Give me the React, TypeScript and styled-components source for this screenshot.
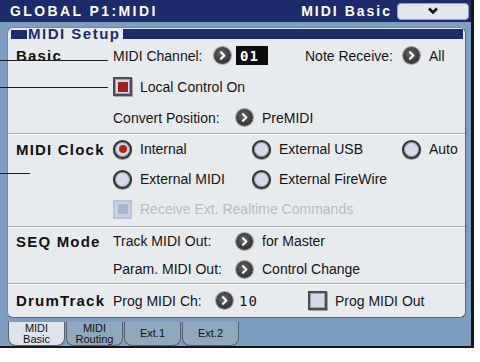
import * as React from 'react'
import styled, { createGlobalStyle } from 'styled-components'

const Global = createGlobalStyle`
  body {
    margin: 0;
    background: #fff;
    font-family: "Liberation Sans", Arial, sans-serif;
  }
`

const NAVY = '#1b2b6b'
const STEEL = '#7d9dc1'

const Screen = styled.div`
  position: relative;
  width: 471px;
  height: 346px;
  border-right: 3px solid #161616;
  border-bottom: 2px solid #161616;
  background: ${STEEL};
  display: flex;
  flex-direction: column;
`

const Header = styled.div`
  height: 22px;
  background: ${NAVY};
  display: flex;
  align-items: center;
  padding-left: 10px;
  color: #fff;
`

const HeaderTitle = styled.div`
  flex: 1;
  font: bold 14px "Liberation Sans", sans-serif;
  letter-spacing: 2.4px;
`

const PageName = styled.div`
  font: bold 14px "Liberation Sans", sans-serif;
  letter-spacing: 2px;
  margin-right: 5px;
`

const MenuButton = styled.div`
  width: 70px;
  height: 15px;
  margin-right: 2px;
  border-radius: 4px;
  background: #e1e6ef;
  border: 1px solid #9aa3b4;
  display: flex;
  align-items: center;
  justify-content: center;
`

const Body = styled.div`
  flex: 1;
  padding: 5px 5px 0 7px;
`

const Panel = styled.div`
  height: 291px;
  box-sizing: border-box;
  background: #e8ebee;
  border: 1px solid #7e848c;
  border-right-color: #5d636b;
  border-bottom-color: #5d636b;
  border-radius: 6px;
  display: flex;
  flex-direction: column;
`

const SectionHead = styled.div`
  height: 12px;
  display: flex;
  align-items: center;
  padding: 0 2px 0 3px;
`

const HeadSquare = styled.div`
  width: 16px;
  height: 9px;
  background: ${NAVY};
`

const HeadText = styled.div`
  font: bold 15px "Liberation Sans", sans-serif;
  letter-spacing: 1.5px;
  color: ${NAVY};
  padding: 0 2px 0 1px;
  line-height: 12px;
`

const HeadBar = styled.div`
  flex: 1;
  height: 10px;
  background: ${NAVY};
`

const Group = styled.div<{ $pb?: number }>`
  display: grid;
  grid-template-columns: 105px 1fr;
  padding-bottom: ${p => p.$pb ?? 0}px;
`

const GroupLabel = styled.div<{ $h: number }>`
  height: ${p => p.$h}px;
  display: flex;
  align-items: center;
  padding-left: 8px;
  font: bold 15px "Liberation Sans", sans-serif;
  letter-spacing: 1.2px;
  color: #111;
`

const Rows = styled.div`
  display: flex;
  flex-direction: column;
`

const Row = styled.div<{ $h: number }>`
  height: ${p => p.$h}px;
  display: flex;
  align-items: center;
`

const Divider = styled.div`
  height: 1px;
  background: #a7abb1;
  box-shadow: 0 1px 0 #fbfcfd;
`

const Slot = styled.div<{ $w?: number }>`
  display: flex;
  align-items: center;
  width: ${p => (p.$w ? `${p.$w}px` : 'auto')};
  flex: ${p => (p.$w ? 'none' : '1')};
`

const Text = styled.span<{ $w?: number; $off?: boolean }>`
  font: 14px "Liberation Sans", sans-serif;
  color: ${p => (p.$off ? '#b6bbc5' : '#141414')};
  white-space: nowrap;
  ${p => (p.$w ? `width: ${p.$w}px;` : '')}
`

const ValueText = styled(Text)`
  margin-left: 9px;
`

const Num = styled.span`
  margin-left: 6px;
  font: 14px "DejaVu Sans Mono", monospace;
  letter-spacing: 1px;
  color: #141414;
`

const ArrowBall = styled.div`
  width: 17px;
  height: 17px;
  border-radius: 50%;
  background: radial-gradient(circle at 45% 40%, #6a6a6a 0%, #3c3c3c 55%, #262626 100%);
  box-shadow: 0 0 0 1px #9a9ea6;
  display: flex;
  align-items: center;
  justify-content: center;
  margin-left: 1px;
  flex: none;
`

const ValueBox = styled.div`
  margin-left: 5px;
  width: 32px;
  height: 19px;
  background: #0c0c0c;
  color: #fff;
  font: bold 14px "DejaVu Sans Mono", monospace;
  letter-spacing: 1px;
  display: flex;
  align-items: center;
  padding-left: 4px;
  box-sizing: border-box;
`

const Box = styled.div<{ $off?: boolean }>`
  width: 19px;
  height: 19px;
  box-sizing: border-box;
  border: 2px solid ${p => (p.$off ? '#b9c3d8' : '#4a4d54')};
  box-shadow: ${p => (p.$off ? 'none' : 'inset 0 0 0 1px #9aa2b2, 1px 1px 0 #a0a4ab')};
  background: ${p => (p.$off ? '#c9d1e2' : '#d3dbea')};
  display: flex;
  align-items: center;
  justify-content: center;
  margin-right: 8px;
  flex: none;
`

const BoxMark = styled.div<{ $off?: boolean }>`
  width: 10px;
  height: 10px;
  background: ${p => (p.$off ? '#aab6d0' : '#a3201b')};
`

const RadioRing = styled.div`
  width: 19px;
  height: 19px;
  box-sizing: border-box;
  border-radius: 50%;
  border: 2.5px solid #333;
  box-shadow: inset 0 0 0 1px #8a92a4, 0 1px 1px #8b8b8b;
  background: #d3dbeb;
  display: flex;
  align-items: center;
  justify-content: center;
  margin-right: 8px;
  flex: none;
`

const RadioDot = styled.div`
  width: 8px;
  height: 8px;
  border-radius: 50%;
  background: #b8221d;
`

const TabBar = styled.div`
  height: 28px;
  box-sizing: border-box;
  padding: 4px 0 0 8px;
  display: flex;
  gap: 1px;
`

const Tab = styled.div<{ $active?: boolean }>`
  width: 57px;
  height: 24px;
  box-sizing: border-box;
  border: 1px solid #56606e;
  border-top: none;
  border-radius: 0 0 8px 8px;
  background: ${p => (p.$active ? '#dde4ee' : '#8fa8bb')};
  display: flex;
  flex-direction: column;
  align-items: center;
  justify-content: center;
  font: 11px "Liberation Sans", sans-serif;
  line-height: 11px;
  color: #111;
`

const Callout = styled.div<{ $y: number; $w: number }>`
  position: absolute;
  left: 0;
  top: ${p => p.$y}px;
  width: ${p => p.$w}px;
  height: 1px;
  background: #1c1c1c;
`

const Arrow = () => (
  <ArrowBall>
    <svg width="9" height="9" viewBox="0 0 9 9">
      <path d="M3 1.2 L6.3 4.5 L3 7.8" fill="none" stroke="#fff" strokeWidth="2.2" strokeLinecap="round" strokeLinejoin="round" />
    </svg>
  </ArrowBall>
)

const Check = ({ on, off, label }: { on?: boolean; off?: boolean; label: string }) => (
  <>
    <Box $off={off}>{(on || off) && <BoxMark $off={off} />}</Box>
    <Text $off={off}>{label}</Text>
  </>
)

const Radio = ({ on, label }: { on?: boolean; label: string }) => (
  <>
    <RadioRing>{on && <RadioDot />}</RadioRing>
    <Text>{label}</Text>
  </>
)

export default function App() {
  return (
    <Screen>
      <Global />
      <Header>
        <HeaderTitle>GLOBAL P1:MIDI</HeaderTitle>
        <PageName>MIDI Basic</PageName>
        <MenuButton>
          <svg width="12" height="8" viewBox="0 0 12 8">
            <path d="M2 1.5 L6 5.5 L10 1.5" fill="none" stroke="#111" strokeWidth="2.6" />
          </svg>
        </MenuButton>
      </Header>
      <Body>
        <Panel>
          <SectionHead>
            <HeadSquare />
            <HeadText>MIDI Setup</HeadText>
            <HeadBar />
          </SectionHead>

          <Group>
            <GroupLabel $h={31}>Basic</GroupLabel>
            <Rows>
              <Row $h={31}>
                <Slot $w={192}>
                  <Text $w={100}>MIDI Channel:</Text>
                  <Arrow />
                  <ValueBox>01</ValueBox>
                </Slot>
                <Slot>
                  <Text $w={97}>Note Receive:</Text>
                  <Arrow />
                  <ValueText>All</ValueText>
                </Slot>
              </Row>
              <Row $h={31}>
                <Check on label="Local Control On" />
              </Row>
              <Row $h={31}>
                <Text $w={122}>Convert Position:</Text>
                <Arrow />
                <ValueText>PreMIDI</ValueText>
              </Row>
            </Rows>
          </Group>
          <Divider />

          <Group $pb={2}>
            <GroupLabel $h={30}>MIDI Clock</GroupLabel>
            <Rows>
              <Row $h={30}>
                <Slot $w={139}><Radio on label="Internal" /></Slot>
                <Slot $w={150}><Radio label="External USB" /></Slot>
                <Slot><Radio label="Auto" /></Slot>
              </Row>
              <Row $h={30}>
                <Slot $w={139}><Radio label="External MIDI" /></Slot>
                <Slot><Radio label="External FireWire" /></Slot>
              </Row>
              <Row $h={30}>
                <Check off label="Receive Ext. Realtime Commands" />
              </Row>
            </Rows>
          </Group>
          <Divider />

          <Group>
            <GroupLabel $h={28}>SEQ Mode</GroupLabel>
            <Rows>
              <Row $h={28}>
                <Text $w={122}>Track MIDI Out:</Text>
                <Arrow />
                <ValueText>for Master</ValueText>
              </Row>
              <Row $h={28}>
                <Text $w={122}>Param. MIDI Out:</Text>
                <Arrow />
                <ValueText>Control Change</ValueText>
              </Row>
            </Rows>
          </Group>
          <Divider />

          <Group>
            <GroupLabel $h={33}>DrumTrack</GroupLabel>
            <Row $h={33}>
              <Slot $w={195}>
                <Text $w={102}>Prog MIDI Ch:</Text>
                <Arrow />
                <Num>10</Num>
              </Slot>
              <Check label="Prog MIDI Out" />
            </Row>
          </Group>
        </Panel>
      </Body>
      <TabBar>
        <Tab $active><span>MIDI</span><span>Basic</span></Tab>
        <Tab><span>MIDI</span><span>Routing</span></Tab>
        <Tab>Ext.1</Tab>
        <Tab>Ext.2</Tab>
      </TabBar>

      <Callout $y={60} $w={108} />
      <Callout $y={87} $w={108} />
      <Callout $y={173} $w={30} />
    </Screen>
  )
}
